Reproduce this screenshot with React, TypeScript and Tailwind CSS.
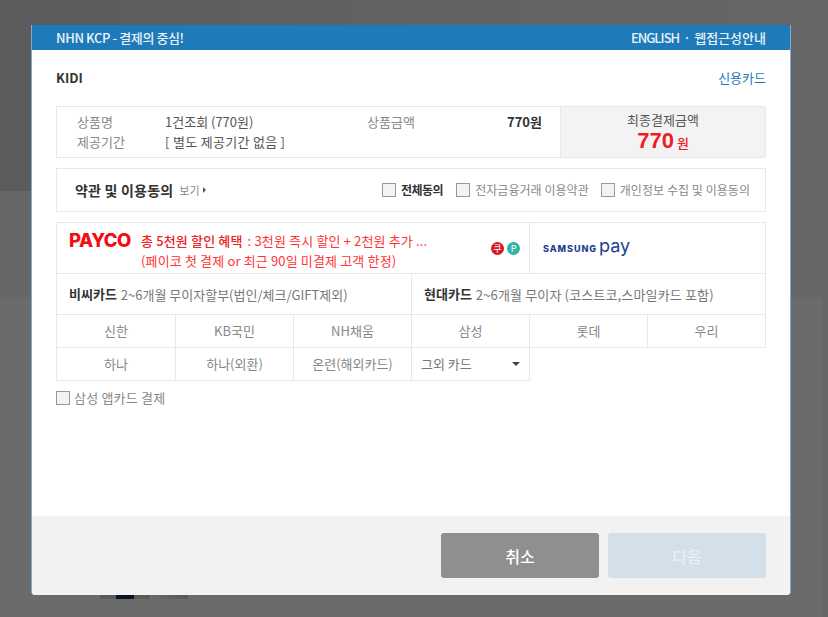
const font = { fontFamily: '"Noto Sans CJK KR", "Liberation Sans", sans-serif' };
const logoFont = { fontFamily: 'Inter, "Liberation Sans", sans-serif' };

const Check = ({ label, bold }: { label: string; bold?: boolean }) => (
  <label className="flex items-center">
    <span className="w-[14px] h-[14px] border border-[#999] bg-[#f3f3f3] mr-[5px]" />
    <span className={bold ? 'text-[12px] font-bold text-[#333] tracking-[-0.5px]' : 'text-[12px] text-[#888] tracking-[0.05px]'}>{label}</span>
  </label>
);

const Cell = ({ label }: { label: string }) => (
  <div className="h-[33px] border-r border-b border-[#e8e8e8] flex items-center justify-center text-[13px] text-[#888]">{label}</div>
);

export default function App() {
  const row1 = ['신한', 'KB국민', 'NH채움', '삼성', '롯데', '우리'];
  const row2 = ['하나', '하나(외환)', '온련(해외카드)'];
  return (
    <div className="relative w-[828px] h-[617px] overflow-hidden bg-[#666666]" style={font}>
      {/* dimmed page behind the modal */}
      <div className="h-[191px] bg-gradient-to-r from-[#5b5b5d] via-[#626263] to-[#666666]" />
      <div className="h-[106px] bg-[#666666]" />
      <div className="h-[320px] w-[823px] bg-[#6b6b6b] pl-[100px] pt-[298px]">
        <div className="w-[88px] h-[4px] flex">
          <div className="w-[16px] bg-[#5a5a5a]" />
          <div className="w-[18px] bg-[#0c1528]" />
          <div className="w-[16px] bg-[#5a5a5a]" />
          <div className="flex-1 bg-gradient-to-r from-[#6b6b6b] to-[#55555c]" />
        </div>
      </div>

      {/* modal */}
      <div className="absolute left-[31px] top-[25px] w-[760px] h-[570px] bg-white rounded-b-[4px] overflow-hidden flex flex-col border-x border-[#7fa8e0]">
        <div className="h-[25px] shrink-0 bg-[#1f7aba] flex items-center justify-between px-[24px] text-[13px] font-medium text-[#e8f2f8] tracking-[-0.4px]">
          <span>NHN KCP - 결제의 중심!</span>
          <span className="flex gap-[4px]">
            <span className="tracking-[-1px]">ENGLISH</span>
            <span>·</span>
            <span className="tracking-[0px]">웹접근성안내</span>
          </span>
        </div>

        <div className="flex-1 px-[24px] bg-white">
          <div className="h-[56px] flex items-center justify-between">
            <span className="text-[13px] font-bold text-[#333]">KIDI</span>
            <span className="text-[13px] text-[#1f7aba]">신용카드</span>
          </div>

          <div className="h-[52px] border border-[#e8e8e8] flex text-[13px]">
            <div className="flex-1 pl-[20px] pt-[5px] leading-[20px]">
              <div className="flex">
                <span className="w-[88px] text-[#888]">상품명</span>
                <span className="w-[202px] text-[#555]">1건조회 (770원)</span>
                <span className="w-[100px] text-[#888]">상품금액</span>
                <span className="w-[75px] text-right font-bold text-[#333]">770원</span>
              </div>
              <div className="flex">
                <span className="w-[88px] text-[#888]">제공기간</span>
                <span className="text-[#555] tracking-[0.3px]">[ 별도 제공기간 없음 ]</span>
              </div>
            </div>
            <div className="w-[205px] bg-[#f3f3f3] border-l border-[#e8e8e8] flex flex-col items-center pt-[4px]">
              <span className="text-[13px] leading-[17px] text-[#555]">최종결제금액</span>
              <span className="flex items-baseline leading-[25px] text-[#ee1c25] font-bold">
                <span className="text-[22px]" style={{ fontFamily: '"Liberation Sans", sans-serif' }}>770</span>
                <span className="text-[13px] ml-[3px] font-medium">원</span>
              </span>
            </div>
          </div>

          <div className="h-[44px] mt-[10px] border border-[#e8e8e8] flex items-center pl-[18px] pr-[15px]">
            <span className="text-[14px] font-bold text-[#333] tracking-[0.2px]">약관 및 이용동의</span>
            <span className="text-[11px] text-[#888] ml-[6px]">보기</span>
            <span className="ml-[3px] w-0 h-0 border-y-[3px] border-y-transparent border-l-[3px] border-l-[#555]" />
            <div className="ml-auto flex gap-[13px]">
              <Check label="전체동의" bold />
              <Check label="전자금융거래 이용약관" />
              <div className="-ml-px">
                <Check label="개인정보 수집 및 이용동의" />
              </div>
            </div>
          </div>

          <div className="mt-[10px] border-l border-t border-[#e8e8e8]">
            <div className="h-[51px] flex border-r border-b border-[#e8e8e8]">
              <div className="flex-1 relative border-r border-[#e8e8e8] flex pl-[12px] pt-[7px]">
                <span className="w-[62px] shrink-0 text-[18.5px] leading-[20px] font-extrabold text-[#f20d14] tracking-[-0.5px]" style={logoFont}>PAYCO</span>
                <div className="ml-[10px] text-[13px] leading-[20px] text-[#f33] tracking-[0.15px] mt-[1px]">
                  <div><b className="font-medium text-[#e22] mr-[2px]">총 5천원 할인 혜택</b> : 3천원 즉시 할인 + 2천원 추가 ...</div>
                  <div>(페이코 첫 결제 or 최근 90일 미결제 고객 한정)</div>
                </div>
                <div className="absolute right-[9px] top-[19px] flex gap-[3px]">
                  <span className="w-[13px] h-[13px] rounded-full bg-[#d9181e] text-white text-[9px] leading-[13px] text-center">쿠</span>
                  <span className="w-[13px] h-[13px] rounded-full bg-[#2fb5a5] text-white text-[9px] leading-[13px] text-center">P</span>
                </div>
              </div>
              <div className="w-[235px] flex items-center pl-[13px]">
                <span className="text-[9px] font-extrabold tracking-[0.95px] text-[#1f3f8f] mt-[1px]" style={logoFont}>SAMSUNG</span>
                <span className="text-[18px] leading-none text-[#1f3f8f] ml-[2px] mb-[5px]" style={logoFont}>pay</span>
              </div>
            </div>

            <div className="h-[41px] flex border-r border-b border-[#e8e8e8] text-[13px] text-[#777]">
              <div className="w-[355px] border-r border-[#e8e8e8] flex items-center pl-[12px] pt-[2px]">
                <b className="text-[#333] font-bold mr-1 -mt-[2px]">비씨카드</b>2~6개월 무이자할부(법인/체크/GIFT제외)
              </div>
              <div className="flex-1 flex items-center pl-[12px] pt-[2px] tracking-[0.15px]">
                <b className="text-[#333] font-bold mr-1 -mt-[2px] tracking-normal">현대카드</b>2~6개월 무이자 (코스트코,스마일카드 포함)
              </div>
            </div>

            <div className="grid grid-cols-[119px_repeat(5,118px)]">
              {row1.map((c) => <Cell key={c} label={c} />)}
              {row2.map((c) => <Cell key={c} label={c} />)}
              <div className="h-[33px] border-r border-b border-[#e8e8e8] flex items-center justify-between pl-[9px] pr-[9px] text-[13px] text-[#777]">
                <span>그외 카드</span>
                <span className="w-0 h-0 border-x-[4px] border-x-transparent border-t-[4px] border-t-[#444]" />
              </div>
            </div>
          </div>

          <div className="mt-[7px]">
            <label className="flex items-center">
              <span className="w-[14px] h-[14px] border border-[#999] bg-[#f3f3f3] mr-[4px]" />
              <span className="text-[13px] text-[#888] tracking-[0.2px]">삼성 앱카드 결제</span>
            </label>
          </div>
        </div>

        <div className="h-[79px] shrink-0 bg-[#f2f2f2] -mx-px flex justify-end gap-[9px] pt-[17px] pr-[25px]">
          <button className="w-[158px] h-[45px] rounded-[3px] bg-[#8f8f8f] text-white text-[16px] font-medium">취소</button>
          <button className="w-[158px] h-[45px] rounded-[3px] bg-[#d3e0ea] text-[#e9eff4] text-[16px] font-medium">다음</button>
        </div>
      </div>
    </div>
  );
}
